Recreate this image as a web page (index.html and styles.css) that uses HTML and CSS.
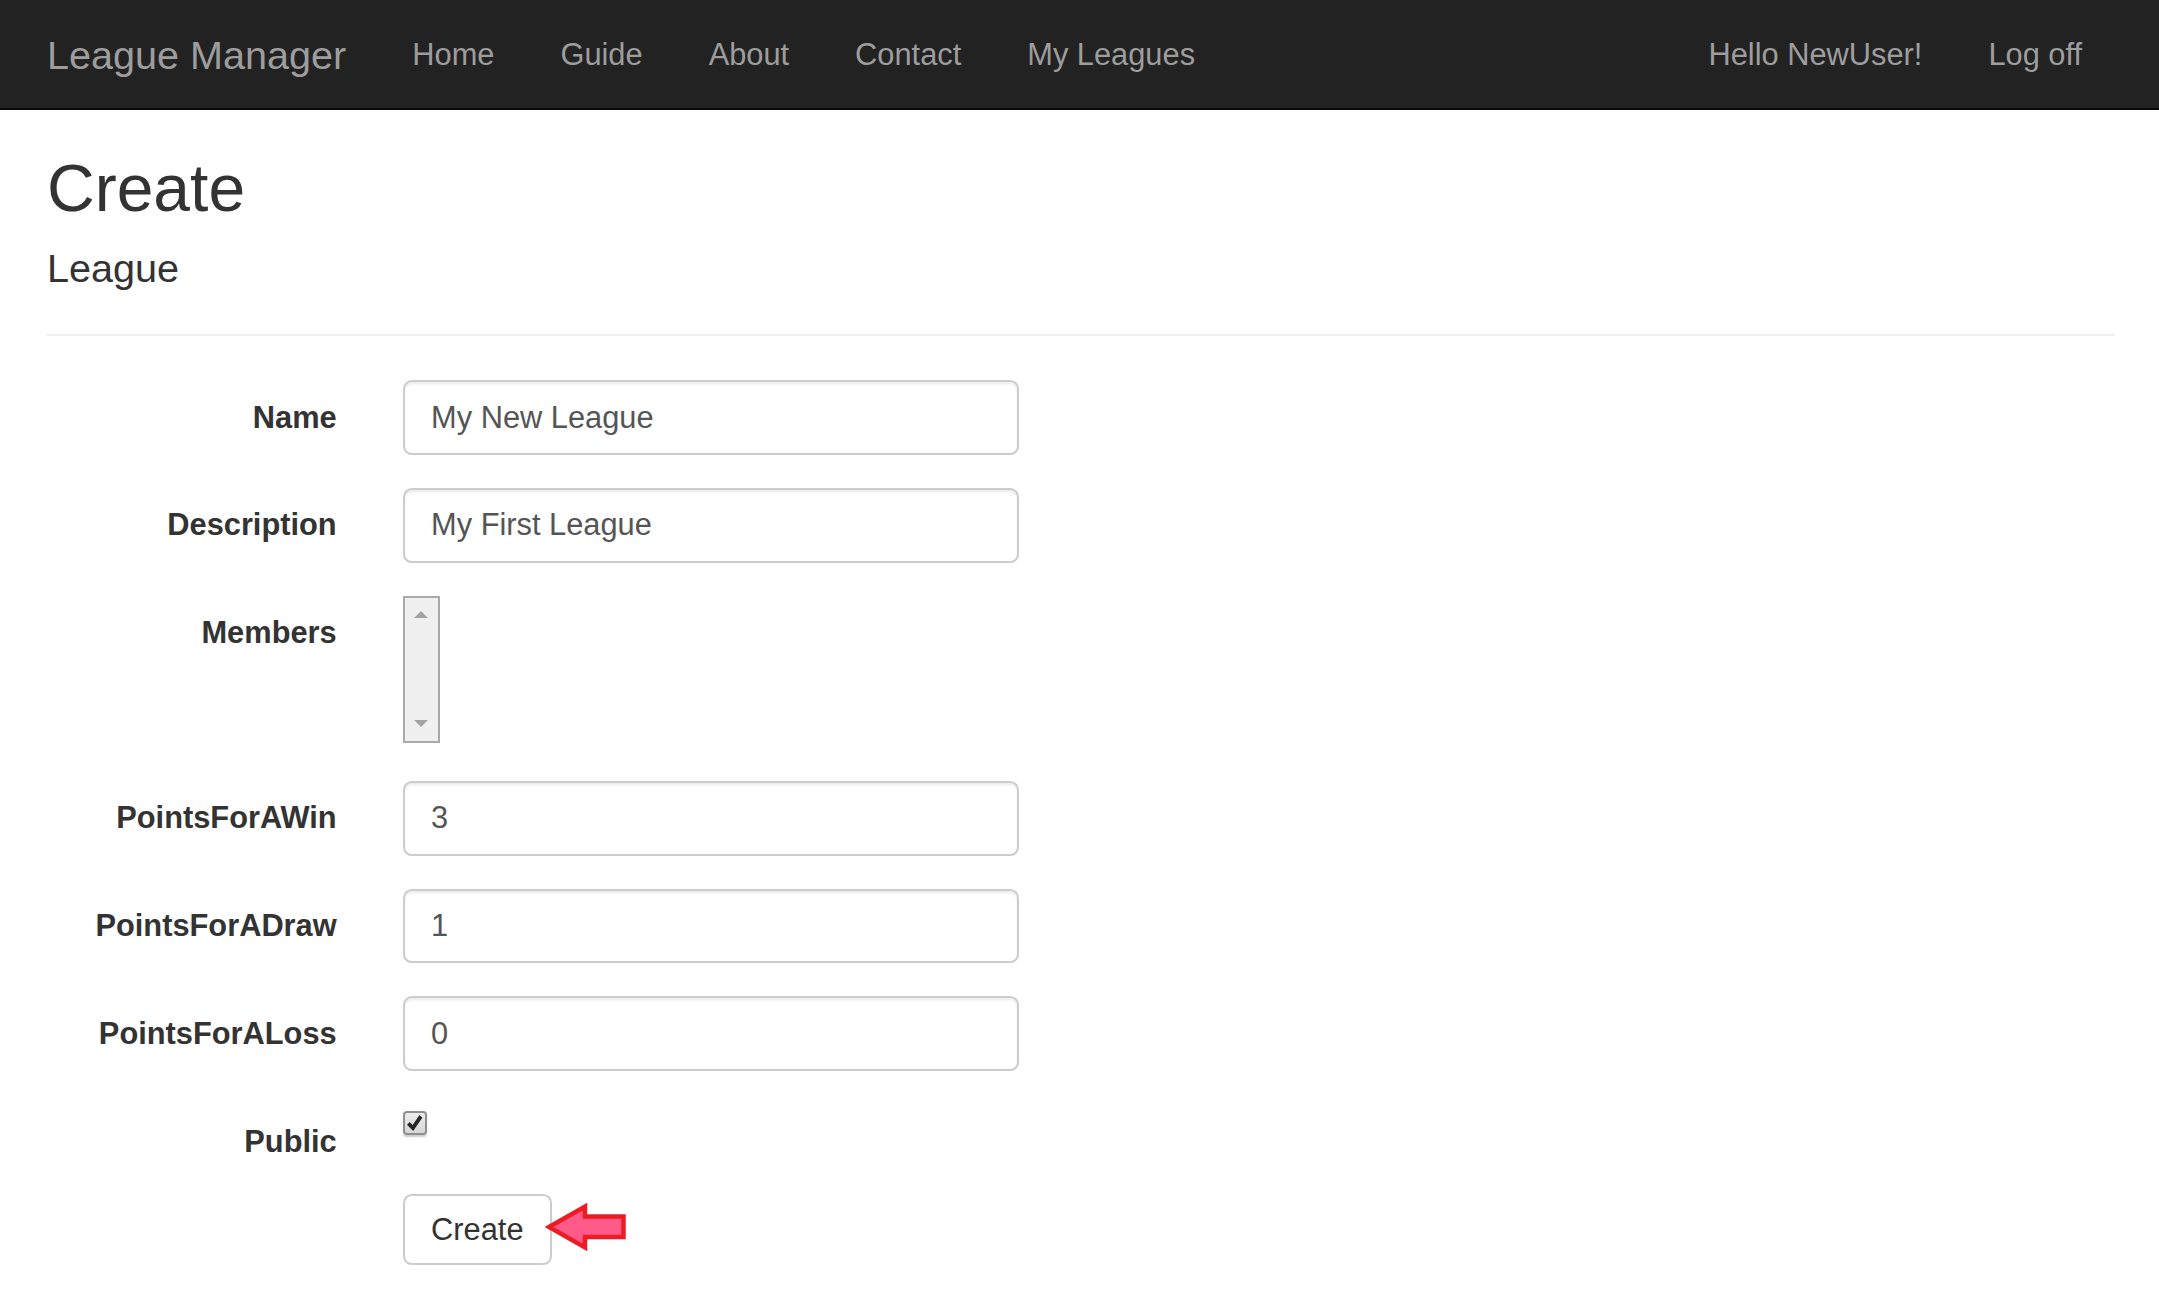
FILE: index.html
```html
<!DOCTYPE html>
<html lang="en">
<head>
<meta charset="utf-8">
<title>Create - League Manager</title>
<link rel="stylesheet" href="styles.css">
</head>
<body>
<header class="navbar">
  <div class="navbar-left">
    <a class="brand" href="#">League Manager</a>
    <ul class="nav">
      <li><a href="#">Home</a></li>
      <li><a href="#">Guide</a></li>
      <li><a href="#">About</a></li>
      <li><a href="#">Contact</a></li>
      <li><a href="#">My Leagues</a></li>
    </ul>
  </div>
  <ul class="nav">
    <li><a href="#">Hello NewUser!</a></li>
    <li><a href="#">Log off</a></li>
  </ul>
</header>

<main class="container">
  <h2>Create</h2>
  <form class="form-horizontal">
    <h4>League</h4>
    <hr>
    <div class="form-group">
      <label class="control-label">Name</label>
      <div class="field"><input class="form-control" type="text" value="My New League"></div>
    </div>
    <div class="form-group">
      <label class="control-label">Description</label>
      <div class="field"><input class="form-control" type="text" value="My First League"></div>
    </div>
    <div class="form-group">
      <label class="control-label">Members</label>
      <div class="field">
        <div class="listbox">
          <span class="tri-up"></span>
          <span class="tri-down"></span>
        </div>
      </div>
    </div>
    <div class="form-group">
      <label class="control-label">PointsForAWin</label>
      <div class="field"><input class="form-control" type="text" value="3"></div>
    </div>
    <div class="form-group">
      <label class="control-label">PointsForADraw</label>
      <div class="field"><input class="form-control" type="text" value="1"></div>
    </div>
    <div class="form-group">
      <label class="control-label">PointsForALoss</label>
      <div class="field"><input class="form-control" type="text" value="0"></div>
    </div>
    <div class="form-group check-row">
      <label class="control-label">Public</label>
      <div class="field">
        <span class="checkbox">
          <svg viewBox="0 0 24 24" width="20" height="20"><path d="M4 12.5 L9.5 18 L19 4" fill="none" stroke="#262626" stroke-width="4.6" stroke-linejoin="miter"/></svg>
        </span>
      </div>
    </div>
    <div class="form-group">
      <div class="field offset">
        <button class="btn" type="button">Create</button>
        <svg class="arrow" viewBox="0 0 84 50" width="84" height="50">
          <path d="M4 25 L40 4.5 L40 14.5 L78.5 14.5 L78.5 35 L40 35 L40 45.5 Z" fill="#ff5a8a" stroke="#ed1c24" stroke-width="4.5" stroke-linejoin="miter"/>
        </svg>
      </div>
    </div>
  </form>
</main>
</body>
</html>
```

FILE: styles.css
```css
* {
  box-sizing: border-box;
}

body {
  margin: 0;
  font-family: "Liberation Sans", Arial, Helvetica, sans-serif;
  font-size: 30.8px;
  line-height: 44px;
  color: #333;
  background: #fff;
}

/* ---------- navbar ---------- */
.navbar {
  display: flex;
  justify-content: space-between;
  height: 110px;
  background: #222;
  border-bottom: 2.2px solid #080808;
  padding: 0 44px 0 14px;
}

.navbar-left {
  display: flex;
}

.brand {
  display: block;
  padding: 33px;
  font-size: 39.6px;
  line-height: 44px;
  color: #9d9d9d;
  text-decoration: none;
}

.nav {
  display: flex;
  list-style: none;
  margin: 0;
  padding: 0;
}

.nav a {
  display: block;
  padding: 33px;
  line-height: 44px;
  color: #9d9d9d;
  text-decoration: none;
}

/* ---------- content ---------- */
.container {
  width: 2134px;
  margin: 0 auto 0 14px;
  padding: 0 33px;
}

h2 {
  font-size: 66px;
  line-height: 1.1;
  font-weight: 400;
  margin: 42px 0 22px;
}

h4 {
  font-size: 39.6px;
  line-height: 1.1;
  font-weight: 400;
  margin: 22px 0;
}

hr {
  margin: 44px 0;
  border: 0;
  border-top: 2.2px solid #eee;
}

.form-group {
  display: flex;
  margin: 0 -33px 33px;
}

.control-label {
  flex: 0 0 355.7px;
  padding: 15.4px 33px 0;
  text-align: right;
  font-weight: bold;
}

.field {
  flex: 1;
  padding: 0 33px;
  position: relative;
}

.field.offset {
  margin-left: 355.7px;
}

.form-control {
  display: block;
  width: 100%;
  max-width: 616px;
  height: 74.8px;
  padding: 13.2px 26.4px;
  font-family: inherit;
  font-size: 30.8px;
  line-height: 44px;
  color: #555;
  background: #fff;
  border: 2.2px solid #ccc;
  border-radius: 8.8px;
  box-shadow: inset 0 2.2px 2.2px rgba(0, 0, 0, 0.075);
}

/* empty multi-select list box */
.listbox {
  display: flex;
  flex-direction: column;
  justify-content: space-between;
  align-items: center;
  width: 37px;
  height: 147px;
  margin-bottom: 5px;
  padding: 13.7px 0;
  background: #f0f0f0;
  border: 2px solid #a9a9a9;
}

.tri-up,
.tri-down {
  display: block;
  width: 0;
  height: 0;
  border-left: 7px solid transparent;
  border-right: 7px solid transparent;
}

.tri-up {
  border-bottom: 7.5px solid #a3a3a3;
}

.tri-down {
  border-top: 7.5px solid #a3a3a3;
}

/* checkbox row */
.check-row {
  margin-bottom: 30.6px;
}

.checkbox {
  display: flex;
  align-items: center;
  justify-content: center;
  width: 24px;
  height: 24px;
  margin-top: 7px;
  border: 2px solid #8e8e8e;
  border-radius: 4px;
  background: linear-gradient(#ececec, #d6d6d6);
  box-shadow: 0 1.5px 1.5px rgba(0, 0, 0, 0.2);
}

/* button */
.btn {
  display: block;
  height: 71px;
  padding: 2px 26.4px 0;
  font-family: inherit;
  font-size: 30.8px;
  line-height: 64.6px;
  color: #333;
  background: #fff;
  border: 2.2px solid #ccc;
  border-radius: 8.8px;
}

.arrow {
  position: absolute;
  left: 175px;
  top: 8px;
}
```
